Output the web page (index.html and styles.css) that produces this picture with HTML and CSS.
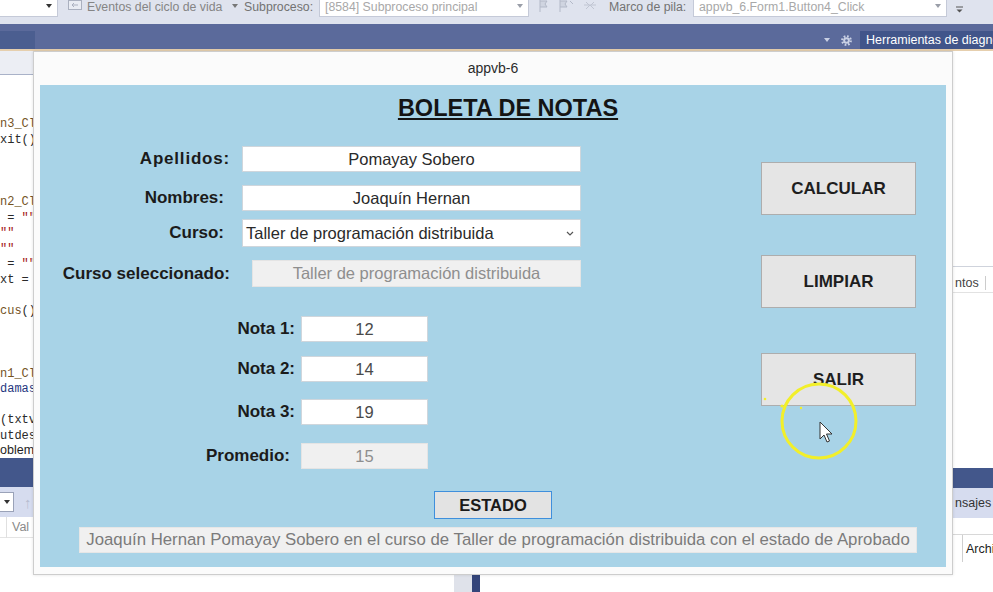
FILE: index.html
```html
<!DOCTYPE html>
<html lang="es">
<head>
<meta charset="utf-8">
<title>appvb-6</title>
<link rel="stylesheet" href="styles.css">
</head>
<body>
<div class="ide">
  <div class="toolbar">
    <div class="combo combo-a"><span class="caret dark"></span></div>
    <svg class="tb-icon" width="14" height="11" viewBox="0 0 14 11"><rect x="0.5" y="0.5" width="13" height="9" fill="#e9ecf3" stroke="#aab0bf"/><path d="M4 5h6M4 5l2-2M4 5l2 2" stroke="#aab0bf" fill="none"/></svg>
    <span class="tb-text t-eventos">Eventos del ciclo de vida</span>
    <span class="caret tb-caret"></span>
    <span class="tb-text t-sub">Subproceso:</span>
    <div class="combo combo-b"><span class="combo-text">[8584] Subproceso principal</span><span class="caret"></span></div>
    <svg class="tb-icons" width="62" height="12" viewBox="0 0 62 12"><path d="M1 0v12M1 1h7l-2 3 2 3H1" stroke="#b3b9c8" fill="#d0d5e1"/><path d="M21 0v12M21 1h7l-2 3 2 3h-7" stroke="#b3b9c8" fill="#d0d5e1"/><path d="M31 1l3 3" stroke="#b3b9c8"/><path d="M47 2l4 4 4-4M47 9l4-4 4 4M45 5h12" stroke="#c0c5d2" fill="none"/></svg>
    <span class="tb-text t-marco">Marco de pila:</span>
    <div class="combo combo-c"><span class="combo-text">appvb_6.Form1.Button4_Click</span><span class="caret"></span></div>
    <svg class="tb-overflow" width="9" height="14" viewBox="0 0 9 14"><path d="M1 7h7" stroke="#555"/><path d="M1.5 9.5h6l-3 3z" fill="#555"/></svg>
  </div>

  <div class="band">
    <div class="band-tab-left"></div>
    <div class="band-fill"></div>
    <div class="band-tools">
      <span class="band-caret"></span>
      <svg class="gear" width="11" height="11" viewBox="0 0 11 11"><circle cx="5.5" cy="5.5" r="4.3" fill="none" stroke="#c9d0e4" stroke-width="2.2" stroke-dasharray="1.7 1.68"/><circle cx="5.5" cy="5.5" r="3.3" fill="#c9d0e4"/><circle cx="5.5" cy="5.5" r="1.3" fill="#5b6a9b"/></svg>
    </div>
    <div class="band-tab-right">Herramientas de diagnóstico</div>
  </div>

  <div class="workspace">
    <div class="editor">
      <div class="editor-tabs"></div>
      <div class="code">
        <div class="ln c-m">n3_Cl</div>
        <div class="ln c-d">xit()</div>
        <div class="ln"> </div>
        <div class="ln"> </div>
        <div class="ln"> </div>
        <div class="ln c-m">n2_Cl</div>
        <div class="ln c-d"> = <span class="c-s">""</span></div>
        <div class="ln c-s">""</div>
        <div class="ln c-s">""</div>
        <div class="ln c-d"> = <span class="c-s">""</span></div>
        <div class="ln c-d">xt =</div>
        <div class="ln"> </div>
        <div class="ln c-m">cus<span class="c-d">()</span></div>
        <div class="ln"> </div>
        <div class="ln"> </div>
        <div class="ln"> </div>
        <div class="ln c-m">n1_Cl</div>
        <div class="ln c-v">damas</div>
        <div class="ln"> </div>
        <div class="ln c-d">(txtv</div>
        <div class="ln c-d">utdes</div>
      </div>
      <div class="problems">oblem</div>
      <div class="dock-band"></div>
      <div class="dock-toolbar">
        <span class="mini-combo"><span class="caret dark"></span></span>
        <span class="dock-up">↑</span>
      </div>
      <div class="dock-header"><span class="dock-col"></span><span class="dock-val">Val</span></div>
    </div>

    <div class="center">
      <div class="splitter"></div>
    </div>

    <div class="side">
      <div class="side-top"></div>
      <div class="side-tabs"><span>ntos</span></div>
      <div class="side-mid"></div>
      <div class="side-band"></div>
      <div class="side-row">nsajes</div>
      <div class="side-white"></div>
      <div class="side-archi"><span>Archi</span></div>
    </div>
  </div>

  <div class="window">
    <div class="win-title">appvb-6</div>
    <div class="client">
      <h1 class="form-title">BOLETA DE NOTAS</h1>
      <div class="form-body">
        <div class="fields">
          <div class="row">
            <span class="lbl lbl-ap">Apellidos:</span>
            <div class="box wide">Pomayay Sobero</div>
          </div>
          <div class="row gap-13">
            <span class="lbl">Nombres:</span>
            <div class="box wide">Joaquín Hernan</div>
          </div>
          <div class="row gap-8">
            <span class="lbl">Curso:</span>
            <div class="box wide select">
              <span class="select-text">Taller de programación distribuida</span>
              <svg class="chev" width="8" height="5" viewBox="0 0 8 5"><path d="M1 1l3 3 3-3" stroke="#555" stroke-width="1.2" fill="none"/></svg>
            </div>
          </div>
          <div class="row gap-13">
            <span class="lbl lbl-sel">Curso seleccionado:</span>
            <div class="box disabled sel">Taller de programación distribuida</div>
          </div>

          <div class="notes">
            <div class="row">
              <span class="nlbl">Nota 1:</span>
              <div class="box num">12</div>
            </div>
            <div class="row gap-14">
              <span class="nlbl">Nota 2:</span>
              <div class="box num">14</div>
            </div>
            <div class="row gap-17">
              <span class="nlbl">Nota 3:</span>
              <div class="box num">19</div>
            </div>
            <div class="row gap-18">
              <span class="nlbl prom">Promedio:</span>
              <div class="box num disabled">15</div>
            </div>
          </div>
        </div>

        <div class="buttons">
          <div class="btn">CALCULAR</div>
          <div class="btn b-limpiar">LIMPIAR</div>
          <div class="btn b-salir">SALIR</div>
        </div>
      </div>
      <div class="estado">ESTADO</div>
      <div class="status">Joaquín Hernan Pomayay Sobero en el curso de Taller de programación distribuida con el estado de Aprobado</div>
    </div>
  </div>

  <svg class="ring" width="110" height="95" viewBox="0 0 110 95">
    <circle cx="64" cy="46" r="37" fill="none" stroke="#f2ef2a" stroke-width="3"/>
    <circle cx="10" cy="24" r="1.3" fill="#f2ef2a"/>
    <circle cx="27" cy="31" r="1.6" fill="#f2ef2a"/>
    <circle cx="46" cy="33" r="1.2" fill="#f2ef2a"/>
    <path d="M65 47v17l4-4 3 7 2.5-1-3-7h5.5z" fill="#fff" stroke="#333" stroke-width="1"/>
  </svg>
</div>
</body>
</html>
```
FILE: styles.css
```css
* { box-sizing: border-box; }
html, body { margin: 0; padding: 0; }
body {
  width: 993px;
  height: 592px;
  overflow: hidden;
  background: #ffffff;
  font-family: "Liberation Sans", Arial, sans-serif;
}
.ide { position: relative; width: 993px; height: 592px; overflow: hidden; }

/* ---------- top toolbar ---------- */
.toolbar {
  height: 24px;
  background: #dfe3ee;
  display: flex;
  align-items: flex-start;
  font-size: 12.3px;
  white-space: nowrap;
}
.combo {
  height: 17px;
  background: #fff;
  border: 1px solid #c5cad8;
  border-top: none;
  display: flex;
  align-items: flex-start;
}
.combo-a { width: 59px; margin-left: -1px; justify-content: flex-end; }
.combo-b { width: 210px; margin-left: 5px; }
.combo-c { width: 254px; margin-left: 6px; }
.combo-text {
  flex: 1;
  line-height: 14px;
  padding-left: 5px;
  color: #a8a8a8;
  overflow: hidden;
}
.caret {
  display: inline-block;
  width: 0; height: 0;
  border-left: 3.5px solid transparent;
  border-right: 3.5px solid transparent;
  border-top: 4px solid #9a9ea8;
  margin: 4px 5px 0 4px;
}
.caret.dark { border-top-color: #333; }
.tb-icon { margin-left: 10px; margin-top: 0; }
.tb-text { line-height: 14px; color: #858585; }
.t-eventos { margin-left: 5px; width: 136px; }
.tb-caret { margin: 4px 0 0 9px; border-top-color: #777; }
.t-sub { margin-left: 6px; width: 70px; color: #737373; }
.tb-icons { margin-left: 10px; }
.t-marco { margin-left: 8px; width: 78px; color: #737373; }
.tb-overflow { margin-left: 8px; }

/* ---------- blue band ---------- */
.band {
  height: 27px;
  background: #5b6a9b;
  border-bottom: 2px solid #e6cfae;
  display: flex;
  align-items: flex-end;
}
.band-tab-left { width: 35px; height: 18px; background: #4b5e90; }
.band-fill { flex: 1; }
.band-tools { height: 18px; display: flex; align-items: center; }
.band-caret {
  width: 0; height: 0;
  border-left: 3.5px solid transparent;
  border-right: 3.5px solid transparent;
  border-top: 4px solid #c9d0e4;
  margin-right: 11px;
}
.gear { margin-right: 8px; }
.band-tab-right {
  width: 133px;
  height: 18px;
  background: #41558a;
  color: #ffffff;
  font-size: 12.5px;
  line-height: 18px;
  padding-left: 6px;
  white-space: nowrap;
  overflow: hidden;
}

/* ---------- workspace behind the window ---------- */
.workspace {
  height: 541px;
  display: grid;
  grid-template-columns: 33px 920px 40px;
}
.editor { display: flex; flex-direction: column; overflow: hidden; }
.editor-tabs { height: 24px; flex: none; background: #eceef4; border-bottom: 1px solid #a9b2c8; }
.code {
  height: 368px;
  flex: none;
  overflow: hidden;
  padding-top: 42px;
  font-family: "Liberation Mono", "DejaVu Sans Mono", monospace;
  font-size: 12px;
  line-height: 15.6px;
}
.ln { white-space: pre; height: 15.6px; }
.c-m { color: #74531f; }
.c-d { color: #2a2a2a; }
.c-s { color: #a31515; }
.c-v { color: #1f377f; }
.problems {
  height: 15px;
  flex: none;
  font-size: 12.5px;
  line-height: 15px;
  color: #1e1e1e;
  background: #fff;
  white-space: nowrap;
}
.dock-band { height: 29px; flex: none; background: #43578b; }
.dock-toolbar {
  height: 30px;
  flex: none;
  background: #d6dcef;
  display: flex;
  align-items: center;
}
.mini-combo {
  width: 14px;
  height: 20px;
  background: #fff;
  border: 1px solid #9aa2b8;
  border-left: none;
  display: flex;
  align-items: center;
  justify-content: center;
}
.mini-combo .caret { margin: 0; }
.dock-up { margin-left: 10px; color: #b6bdd0; font-size: 15px; }
.dock-header {
  height: 21px;
  flex: none;
  border-bottom: 1px solid #e4e4e4;
  display: flex;
  align-items: center;
  font-size: 12.5px;
  color: #8a8a8a;
}
.dock-col { width: 7px; height: 21px; border-right: 1px solid #e0e0e0; }
.dock-val { margin-left: 5px; }

.center { display: flex; flex-direction: column; justify-content: flex-end; }
.splitter {
  margin-left: 421px;
  width: 26px;
  height: 17px;
  background: #dfe2ea;
  border-right: 8px solid #34457a;
}

.side { display: flex; flex-direction: column; font-size: 12.5px; color: #333; white-space: nowrap; overflow: hidden; }
.side-top { height: 215px; }
.side-tabs {
  height: 27px;
  border-top: 1px solid #cfd3dc;
  border-bottom: 1px solid #e2e2e2;
  padding: 9px 0 0 2px;
  color: #444;
}
.side-tabs span { display: inline-block; padding-right: 6px; border-right: 1px solid #ccc; }
.side-mid { height: 175px; }
.side-band { height: 20px; background: #43578b; }
.side-row { height: 30px; background: #d6dcef; line-height: 30px; padding-left: 2px; color: #333; }
.side-white { height: 17px; border-bottom: 1px solid #d8d8d8; }
.side-archi { height: 27px; margin-left: 9px; border-left: 1px solid #cfcfcf; padding: 7px 0 0 3px; color: #222; }

/* ---------- application window ---------- */
.window {
  position: absolute;
  left: 33px;
  top: 51px;
  width: 920px;
  height: 524px;
  background: #fbfbfb;
  border: 1px solid #cdcdcd;
  padding: 0 6px 7px 6px;
  display: flex;
  flex-direction: column;
  box-shadow: 0 0 3px rgba(0, 0, 0, 0.12);
}
.win-title {
  height: 33px;
  line-height: 33px;
  text-align: center;
  font-size: 14px;
  color: #2b2b2b;
}
.client {
  height: 482px;
  background: #a8d3e7;
  display: flex;
  flex-direction: column;
}
.form-title {
  margin: 0;
  padding: 10px 0 0 30px;
  height: 36px;
  text-align: center;
  font-size: 23.5px;
  line-height: 26px;
  font-weight: bold;
  text-decoration: underline;
  color: #141414;
}
.form-body { display: flex; }
.fields { width: 541px; padding-top: 25px; }
.notes { margin-top: 29px; }
.row { display: flex; align-items: center; }
.gap-8 { margin-top: 8px; }
.gap-13 { margin-top: 13px; }
.gap-14 { margin-top: 14px; }
.gap-17 { margin-top: 17px; }
.gap-18 { margin-top: 18px; }
.lbl, .nlbl {
  font-size: 17px;
  font-weight: bold;
  color: #1b1b1b;
  text-align: right;
  white-space: nowrap;
}
.lbl { width: 184px; margin-right: 18px; }
.lbl-ap { width: 190px; margin-right: 12px; letter-spacing: 0.8px; }
.lbl-sel { width: 190px; margin-right: 22px; }
.nlbl { width: 255px; }
.nlbl.prom { padding-right: 5px; }
.box {
  height: 26px;
  background: #ffffff;
  border: 1px solid #cfd6dc;
  font-size: 16.5px;
  line-height: 24px;
  text-align: center;
  color: #2a2a2a;
  white-space: nowrap;
}
.box.wide { width: 339px; }
.box.select {
  height: 28px;
  line-height: 26px;
  text-align: left;
  display: flex;
  align-items: center;
  padding: 0 6px 0 3px;
}
.select-text { flex: 1; }
.box.sel { width: 329px; height: 27px; line-height: 25px; }
.box.num { width: 127px; margin-left: 6px; color: #4a4a4a; }
.box.disabled { background: #f0f0f0; border-color: #e4e4e4; color: #8e8e8e; }

.buttons { margin-left: 180px; padding-top: 41px; display: flex; flex-direction: column; }
.btn {
  width: 155px;
  height: 53px;
  background: #e5e5e5;
  border: 1px solid #adadad;
  font-size: 17px;
  font-weight: bold;
  color: #1e1e1e;
  display: flex;
  align-items: center;
  justify-content: center;
}
.b-limpiar { margin-top: 40px; }
.b-salir { margin-top: 45px; }

.estado {
  align-self: center;
  margin-top: 22px;
  width: 118px;
  height: 28px;
  background: #e3e3e3;
  border: 1px solid #3f8fdc;
  font-size: 16.5px;
  font-weight: bold;
  color: #1a1a1a;
  display: flex;
  align-items: center;
  justify-content: center;
}
.status {
  margin: 8px 0 0 39px;
  width: 838px;
  height: 26px;
  background: #f0f0f0;
  border: 1px solid #e6e6e6;
  font-size: 16.8px;
  line-height: 24px;
  text-align: center;
  color: #7b7b7b;
  white-space: nowrap;
  overflow: hidden;
}

/* cursor highlight overlay */
.ring { position: absolute; left: 755px; top: 375px; }
```
